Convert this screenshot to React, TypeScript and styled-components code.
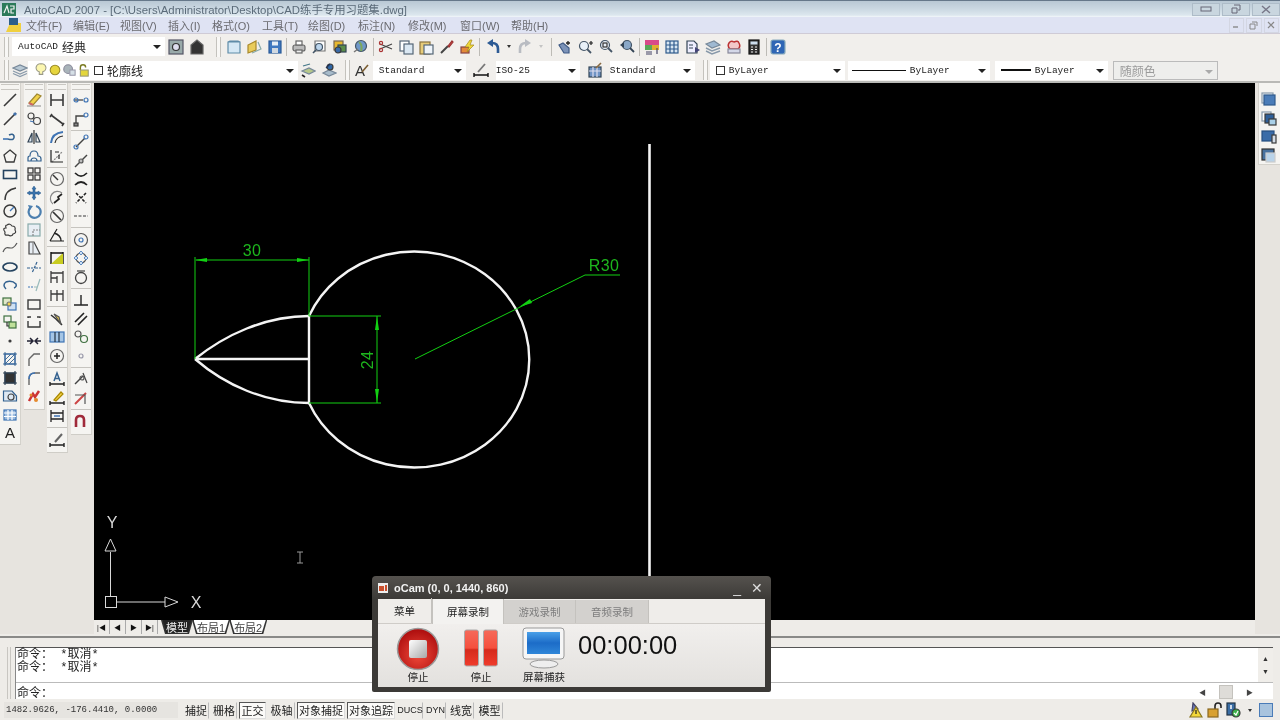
import React from 'react';
import styled, { createGlobalStyle } from 'styled-components';

const CJK = '"Liberation Sans", "Noto Sans CJK SC", sans-serif';
const MONO = '"Liberation Mono", "Noto Sans CJK SC", monospace';

const Global = createGlobalStyle`
  html, body { margin: 0; padding: 0; background: #eeece8; overflow: hidden; }
  * { box-sizing: border-box; }
`;

const Page = styled.div`
  position: relative;
  width: 1280px;
  height: 720px;
  display: flex;
  flex-direction: column;
  overflow: hidden;
  font-family: ${CJK};
  background: #eeece8;
  filter: blur(0.4px);
`;

const TitleBar = styled.div`
  height: 17px;
  flex: none;
  display: flex;
  align-items: center;
  padding-left: 2px;
  border-top: 1px solid #66788a;
  background: linear-gradient(#b9c8d4, #cbd8e2 50%, #dce7ee 88%, #f3f7fa);
  color: #5b6b79;
  font-size: 11.4px;
`;

const TitleText = styled.span`
  margin-left: 8px;
  white-space: nowrap;
`;

const WinButtons = styled.div`
  margin-left: auto;
  display: flex;
  gap: 2px;
`;

const WinButton = styled.div`
  width: 28px;
  height: 13px;
  display: flex;
  align-items: center;
  justify-content: center;
  border: 1px solid #aebcc8;
  background: #c9d6df;
`;

const MenuBar = styled.div`
  height: 17px;
  flex: none;
  display: flex;
  align-items: center;
  padding-left: 5px;
  background: #dfe3f3;
  border-bottom: 1px solid #cfcbd6;
  color: #6b6b70;
  font-size: 11px;
`;

const MenuItem = styled.span<{ $w: number }>`
  width: ${(p) => p.$w}px;
  white-space: nowrap;
`;

const MdiButtons = styled.div`
  margin-left: auto;
  display: flex;
  gap: 2px;
  padding-right: 1px;
`;

const MdiButton = styled.div`
  width: 15.5px;
  height: 15px;
  display: flex;
  align-items: center;
  justify-content: center;
  border: 1px solid #d3d6e2;
  color: #888;
`;

const ToolRow = styled.div<{ $h: number }>`
  height: ${(p) => p.$h}px;
  flex: none;
  display: flex;
  align-items: center;
  padding-left: 4px;
  background: #f1efec;
  border-bottom: ${(p) => (p.$h === 24 ? '2px solid #b9b9b6' : 'none')};
`;

const Grip = styled.div<{ $ml?: number; $mr?: number }>`
  width: 5px;
  height: 20px;
  flex: none;
  margin-left: ${(p) => p.$ml ?? 0}px;
  margin-right: ${(p) => p.$mr ?? 0}px;
  border-left: 1px solid #c4c2bd;
  border-right: 1px solid #c4c2bd;
  background: #f8f7f5;
`;

const Combo = styled.div<{ $w: number; $ml?: number; $pl?: number; $off?: boolean }>`
  position: relative;
  width: ${(p) => p.$w}px;
  height: 19px;
  flex: none;
  margin-left: ${(p) => p.$ml ?? 0}px;
  display: flex;
  align-items: center;
  padding-left: ${(p) => p.$pl ?? 6}px;
  gap: 4px;
  white-space: nowrap;
  background: ${(p) => (p.$off ? '#eeeeec' : '#ffffff')};
  border: ${(p) => (p.$off ? '1px solid #bbb' : 'none')};
  color: ${(p) => (p.$off ? '#9a9a9a' : '#222')};
  font-family: ${MONO};
  font-size: 9.5px;
  &::after {
    content: '';
    position: absolute;
    right: 4px;
    top: 8px;
    border-left: 4px solid transparent;
    border-right: 4px solid transparent;
    border-top: 4px solid ${(p) => (p.$off ? '#aaa' : '#222')};
  }
`;

const ComboCjk = styled.span`
  font-family: ${CJK};
  font-size: 12px;
`;

const LayerState = styled.div`
  display: flex;
  align-items: center;
  flex: none;
  & > svg {
    width: 14px;
    height: 14px;
  }
`;

const Swatch = styled.span`
  width: 9px;
  height: 9px;
  flex: none;
  border: 1px solid #333;
  background: #fff;
`;

const LineSample = styled.span<{ $thick?: boolean; $w: number }>`
  width: ${(p) => p.$w}px;
  height: ${(p) => (p.$thick ? 2.5 : 1)}px;
  flex: none;
  background: #111;
`;

const Tool = styled.div<{ $w?: number }>`
  width: ${(p) => p.$w ?? 20.4}px;
  height: 18.5px;
  flex: none;
  display: flex;
  align-items: center;
  justify-content: center;
`;

const SmallArrow = styled.div<{ $off?: boolean }>`
  width: 12px;
  flex: none;
  display: flex;
  justify-content: center;
  &::after {
    content: '';
    border-left: 2.5px solid transparent;
    border-right: 2.5px solid transparent;
    border-top: 3px solid ${(p) => (p.$off ? '#c4c4c4' : '#333')};
  }
`;

const VSep = styled.div<{ $w?: number }>`
  width: ${(p) => p.$w ?? 5}px;
  height: 18px;
  flex: none;
  display: flex;
  justify-content: center;
  &::after {
    content: '';
    width: 1px;
    background: #bdbbb6;
  }
`;

const IconSvg = styled.svg`
  width: 16px;
  height: 16px;
  fill: none;
  stroke: #3a3a3a;
  stroke-width: 1.2;
  flex: none;
`;

const Main = styled.div`
  height: 551px;
  flex: none;
  display: flex;
`;

const LeftDock = styled.div`
  width: 94px;
  flex: none;
  display: flex;
  align-items: flex-start;
  gap: 2.5px;
  background: #e7e4df;
`;

const VBar = styled.div<{ $h: number }>`
  width: 21px;
  height: ${(p) => p.$h}px;
  flex: none;
  padding-top: 7.75px;
  background: #f5f4f1;
  border-right: 1px solid #d4d2cc;
  border-bottom: 1px solid #cfcdc7;
  position: relative;
  &::before {
    content: '';
    position: absolute;
    left: 1px;
    right: 1px;
    top: 1px;
    height: 4px;
    border-top: 1px solid #c9c7c2;
    border-bottom: 1px solid #c9c7c2;
  }
`;

const HSep = styled.div`
  height: 5px;
  display: flex;
  align-items: center;
  &::after {
    content: '';
    height: 1px;
    width: 100%;
    background: #c6c4bf;
  }
`;

const CenterCol = styled.div`
  width: 1161px;
  flex: none;
  display: flex;
  flex-direction: column;
`;

const Canvas = styled.svg`
  width: 1161px;
  height: 537px;
  flex: none;
  display: block;
  background: #000;
`;

const DimText = styled.text`
  fill: #1db51d;
  font-family: "Liberation Sans", sans-serif;
  font-size: 16px;
  text-anchor: middle;
  letter-spacing: 0.4px;
`;

const UcsText = styled.text`
  fill: #d8d8d8;
  font-family: "Liberation Sans", sans-serif;
  font-size: 16px;
  text-anchor: middle;
`;

const TabBar = styled.div`
  height: 14px;
  flex: none;
  display: flex;
  align-items: stretch;
  background: #eeece8;
  font-size: 11px;
`;

const NavBtn = styled.div`
  width: 16px;
  display: flex;
  align-items: center;
  justify-content: center;
  border-right: 1px solid #aaa;
  color: #111;
  font-size: 7px;
`;

const SheetTab = styled.div<{ $active?: boolean; $ml?: number }>`
  position: relative;
  isolation: isolate;
  margin-left: ${(p) => p.$ml ?? 0}px;
  padding: 0 5px;
  display: flex;
  align-items: center;
  white-space: nowrap;
  clip-path: polygon(0 0, 100% 0, calc(100% - 4px) 100%, 4px 100%);
  background: #333;
  color: ${(p) => (p.$active ? '#eee' : '#444')};
  &::before {
    content: '';
    position: absolute;
    inset: 0 1.5px 1px 1.5px;
    z-index: -1;
    clip-path: polygon(0 0, 100% 0, calc(100% - 4px) 100%, 4px 100%);
    background: ${(p) => (p.$active ? '#222' : '#fff')};
  }
`;

const RightDock = styled.div`
  flex: 1;
  background: #e7e4df;
`;

const RightBar = styled.div`
  width: 22px;
  margin-left: 3px;
  height: 82px;
  padding-top: 7.75px;
  background: #f5f4f1;
  border-left: 1px solid #d4d2cc;
  border-bottom: 1px solid #d4d2cc;
`;

const CommandArea = styled.div`
  height: 64px;
  flex: none;
  display: flex;
  padding: 9px 7px 1px 7px;
  gap: 4px;
  background: #eeece8;
  border-top: 2px solid #8a8a88;
  margin-top: 2px;
`;

const CommandGrip = styled.div`
  width: 4px;
  flex: none;
  border-left: 1px solid #c8c6c1;
  border-right: 1px solid #c8c6c1;
`;

const CommandBox = styled.div`
  flex: 1;
  display: flex;
  flex-direction: column;
  background: #fff;
  border-top: 1px solid #555;
  border-left: 1px solid #888;
`;

const History = styled.div`
  height: 35px;
  flex: none;
  display: flex;
  border-bottom: 1px solid #bbb;
`;

const HistoryText = styled.div`
  flex: 1;
  padding: 1px 0 0 1px;
  font-family: ${MONO};
  font-size: 12px;
  line-height: 13px;
  color: #222;
`;

const VScroll = styled.div`
  width: 15px;
  display: flex;
  flex-direction: column;
  justify-content: space-between;
  align-items: center;
  padding: 7px 0;
  background: #f0eeea;
  color: #333;
  font-size: 7px;
`;

const PromptRow = styled.div`
  flex: 1;
  display: flex;
  align-items: center;
  padding-left: 1px;
  font-family: ${MONO};
  font-size: 12px;
  color: #222;
`;

const HScroll = styled.div`
  margin-left: auto;
  width: 54px;
  margin-right: 20px;
  display: flex;
  align-items: center;
  justify-content: space-between;
  color: #444;
  font-size: 7px;
`;

const Thumb = styled.div`
  width: 14px;
  height: 14px;
  background: #dedcd8;
  border: 1px solid #c4c2bd;
`;

const StatusBar = styled.div`
  height: 20px;
  flex: none;
  display: flex;
  align-items: center;
  padding-left: 4px;
  background: #eeece8;
`;

const Coords = styled.div`
  width: 174px;
  height: 16px;
  margin-right: 5px;
  padding-left: 2px;
  display: flex;
  align-items: center;
  background: #e6e4e0;
  color: #333;
  font-family: "Liberation Mono", monospace;
  font-size: 9px;
  white-space: nowrap;
`;

const StatusBtn = styled.div<{ $w: number; $on?: boolean; $latin?: boolean }>`
  width: ${(p) => p.$w}px;
  height: 17px;
  margin-right: 2px;
  display: flex;
  align-items: center;
  justify-content: center;
  white-space: nowrap;
  color: #222;
  font-size: ${(p) => (p.$latin ? 9 : 11)}px;
  border: 1px solid ${(p) => (p.$on ? '#555' : 'transparent')};
  border-right-color: ${(p) => (p.$on ? '#ddd' : '#bbb')};
  border-bottom-color: ${(p) => (p.$on ? '#ddd' : 'transparent')};
  background: ${(p) => (p.$on ? '#fbfaf8' : 'transparent')};
`;

const Tray = styled.div`
  margin-left: auto;
  display: flex;
  align-items: center;
  gap: 3px;
  padding-right: 7px;
`;

const OCam = styled.div`
  position: absolute;
  left: 372px;
  top: 576px;
  width: 399px;
  height: 116px;
  padding: 0 6px 5px;
  display: flex;
  flex-direction: column;
  border-radius: 4px 4px 2px 2px;
  background: linear-gradient(#55524e, #3c3a37 20%, #3c3a37);
`;

const OCamTitle = styled.div`
  height: 23px;
  flex: none;
  display: flex;
  align-items: center;
  gap: 6px;
  color: #f2f2f2;
  font-family: "Liberation Sans", sans-serif;
  font-size: 11px;
  font-weight: 700;
`;

const OCamClose = styled.div`
  margin-left: auto;
  display: flex;
  align-items: center;
  gap: 10px;
  padding-right: 2px;
  color: #ddd;
  font-family: "Liberation Sans", sans-serif;
  font-size: 14px;
  font-weight: 400;
`;

const OCamTabs = styled.div`
  height: 25px;
  flex: none;
  display: flex;
  align-items: flex-end;
  background: #efedea;
  border-bottom: 1px solid #cfccc8;
`;

const OCamTab = styled.div<{ $kind: 'plain' | 'active' | 'off'; $w: number }>`
  width: ${(p) => p.$w}px;
  height: ${(p) => (p.$kind === 'off' ? 23 : 25)}px;
  margin-bottom: ${(p) => (p.$kind === 'active' ? -1 : 0)}px;
  display: flex;
  align-items: center;
  justify-content: center;
  font-size: 10.5px;
  color: ${(p) => (p.$kind === 'off' ? '#7d7d7d' : '#222')};
  background: ${(p) =>
    p.$kind === 'off' ? '#d3d1ce' : p.$kind === 'active' ? '#f3f2f0' : 'transparent'};
  border-right: 1px solid #c4c2be;
  border-left: ${(p) => (p.$kind === 'active' ? '1px solid #c4c2be' : 'none')};
`;

const OCamBody = styled.div`
  flex: 1;
  display: flex;
  padding-left: 19px;
  background: linear-gradient(#f1efed, #e3e1de);
`;

const CamButton = styled.div<{ $w: number; $ml?: number }>`
  width: ${(p) => p.$w}px;
  margin-left: ${(p) => p.$ml ?? 0}px;
  padding-top: 3px;
  display: flex;
  flex-direction: column;
  align-items: center;
  font-size: 10.5px;
  line-height: 12px;
  color: #222;
  white-space: nowrap;
`;

const Timer = styled.div`
  margin: 6px 0 0 12px;
  font-family: "Liberation Sans", sans-serif;
  font-size: 25.5px;
  line-height: 30px;
  color: #111;
`;

// shorthand colours for the toolbar drawings
const BLUE = '#3f74b5';
const PALE = '#cfe0f2';
const YEL = '#f1d24a';

const ICONS: Record<string, React.ReactNode> = {
  line: <path d="M2 14L14 2" strokeWidth="1.6" />,
  xline: <><path d="M2 14L14 2" strokeWidth="1.6" /><circle cx="13" cy="3" r="1" stroke={BLUE} /></>,
  pline: <><path d="M1 10H6" stroke={BLUE} strokeWidth="1.6" /><path d="M6 10Q13 12 12 7Q11 4 7 6" stroke="#33618f" strokeWidth="1.6" /></>,
  polygon: <path d="M8 2L14 7L12 14H4L2 7Z" strokeWidth="1.3" />,
  rect: <rect x="1.5" y="4.5" width="13" height="8" stroke="#24425f" strokeWidth="1.6" />,
  arc: <path d="M3 15Q3 5 14 3" strokeWidth="1.5" />,
  circle: <><circle cx="8" cy="8" r="6" strokeWidth="1.5" /><path d="M8 8L12 4" stroke={BLUE} /></>,
  cloud: <path d="M5 3Q8 1 10 4Q14 4 13 8Q15 11 11 12Q10 15 6 13Q2 14 3 10Q0 6 4 6Q3 3 5 3Z" />,
  spline: <path d="M1 12C5 2 9 14 15 3" stroke="#555" />,
  ellipse: <ellipse cx="8" cy="8" rx="7" ry="4" stroke="#24425f" strokeWidth="1.7" />,
  earc: <path d="M4 12Q0 8 4 5Q10 3 14 7Q15 10 12 11" stroke="#33618f" strokeWidth="1.5" />,
  insert: <><rect x="1" y="2" width="8" height="7" fill="#dfe8c8" stroke="#3f7040" /><rect x="6" y="7" width="8" height="7" fill={PALE} stroke={BLUE} /><circle cx="7" cy="8" r="2" fill={YEL} stroke="#777" /></>,
  block: <><rect x="2" y="2" width="7" height="6" stroke="#3f7040" /><rect x="7" y="8" width="7" height="6" fill="#bfe09a" stroke="#3f7040" /><path d="M5 8V12H7" stroke="#333" /></>,
  point: <circle cx="8" cy="8" r="1" fill="#333" />,
  hatch: <><rect x="3" y="3" width="10" height="10" stroke={BLUE} /><path d="M3 9L9 3M3 13L13 3M7 13L13 7M1 3H15M1 13H15M3 1V15M13 1V15" stroke="#33618f" strokeWidth=".9" /></>,
  gradient: <><rect x="3" y="3" width="10" height="10" fill="#333" stroke="#234" /><path d="M1 3H15M1 13H15M3 1V15M13 1V15" stroke="#345" /></>,
  region: <><path d="M1.5 3H10L14.5 8V13H1.5Z" fill="#dde8f3" stroke="#33618f" /><circle cx="9" cy="9" r="3" stroke="#444" /></>,
  table: <><rect x="2" y="3" width="12" height="10" fill="#9dbde0" stroke={BLUE} /><path d="M2 6H14M2 9.5H14M6 3V13M10 3V13" stroke="#fff" /></>,
  mtext: <text x="8" y="13" textAnchor="middle" fontSize="15" fontFamily="Liberation Sans" fill="#222" stroke="none">A</text>,

  erase: <><path d="M3 11L11 2L15 4L7 13Z" fill={YEL} stroke="#a08830" /><path d="M3 11L7 13" stroke="#c66" strokeWidth="2" /><path d="M1 14H15" stroke="#999" /></>,
  copyobj: <><circle cx="5" cy="5" r="3" stroke="#444" /><circle cx="11" cy="10" r="3.5" stroke="#444" /><path d="M4 10L8 11" stroke={BLUE} /></>,
  mirror: <><path d="M8 1V15" stroke="#333" /><path d="M6 4L2 13H6Z" fill="#dfe8f0" stroke="#345" /><path d="M10 4L14 13H10Z" stroke="#345" /></>,
  offset: <><path d="M2 13V10Q2 8 4 8Q4 3 8 3Q12 3 12 8Q15 8 15 11V13Z" stroke="#33618f" /><path d="M5 13Q5 10 8 10Q11 10 11 13" stroke="#33618f" /></>,
  array: <><rect x="2" y="2" width="5" height="5" strokeWidth="1.3" /><rect x="9" y="2" width="5" height="5" strokeWidth="1.3" /><rect x="2" y="9" width="5" height="5" strokeWidth="1.3" /><rect x="9" y="9" width="5" height="5" strokeWidth="1.3" /></>,
  move: <path d="M8 1L10 4H9V7H12V6L15 8L12 10V9H9V12H10L8 15L6 12H7V9H4V10L1 8L4 6V7H7V4H6Z" fill="#3972ab" stroke="#2b5a8a" strokeWidth=".5" />,
  rotate: <><path d="M4 5A6 6 0 1 0 10 3" stroke="#4c7faf" strokeWidth="2.2" /><path d="M2 2L7 3L4 7Z" fill="#4c7faf" stroke="none" /></>,
  scale: <><rect x="2" y="2" width="12" height="12" fill="#e8eef4" stroke="#8aa" /><path d="M7 14V8H14" stroke="#888" strokeDasharray="2 1" /></>,
  stretch: <><path d="M3 2H8L14 14H3Z" fill="#e8eef4" stroke="#444" /><path d="M7 2V14" stroke="#888" /></>,
  trim: <path d="M1 9H7M9 9H15M11 3L6 14" stroke="#33618f" strokeDasharray="3 1" />,
  extend: <><path d="M2 10H8" stroke={BLUE} strokeDasharray="2 1" /><path d="M8 10H11M14 2L10 14" stroke="#9bb" /></>,
  brk: <rect x="2" y="4" width="12" height="9" strokeWidth="1.4" />,
  brk2: <path d="M2 7V13H14V7M2 4V3H5M11 3H14V4" strokeWidth="1.4" />,
  join: <path d="M1 8H6M10 8H15M4 5L7 8L4 11M12 5L9 8L12 11" stroke="#223" strokeWidth="1.5" />,
  chamfer: <path d="M14 3H8L3 8V15M6 5L3 8" stroke="#666" strokeWidth="1.4" />,
  fillet: <><path d="M14 3H9Q3 3 3 9V15" stroke="#666" strokeWidth="1.4" /><path d="M9 3Q3 3 3 9" stroke={BLUE} strokeWidth="1.5" /></>,
  explode: <><path d="M3 13L7 6L9 9L13 3" stroke="#c33" strokeWidth="2.5" /><circle cx="5" cy="7" r="1.5" fill="#e58a2d" stroke="none" /><circle cx="10" cy="12" r="2" fill="#e58a2d" stroke="none" /></>,

  dimlin: <path d="M2 2V14M14 2V14M2 8H14" strokeWidth="1.6" />,
  dimali: <path d="M3 3L1 6M13 15L15 12M2 4L14 13" strokeWidth="1.6" />,
  dimarc: <><path d="M2 14Q3 4 14 3" stroke={BLUE} strokeWidth="2" /><path d="M6 14Q7 8 14 7" stroke="#333" /></>,
  dimord: <><path d="M3 14L13 4" stroke="#888" strokeDasharray="2 1" /><path d="M2 2V14H14M6 4H10M10 7V11" stroke="#222" strokeWidth="1.2" /></>,
  dimrad: <><circle cx="8" cy="8" r="6.5" stroke="#666" /><path d="M4 4L9 9" stroke="#333" strokeWidth="1.4" /></>,
  dimjog: <><path d="M13 3A7 7 0 0 0 4 14" stroke="#888" /><path d="M13 4L9 7L10 9L5 13" stroke="#222" strokeWidth="1.7" /></>,
  dimdia: <><circle cx="8" cy="8" r="6.5" stroke="#666" /><path d="M4 4L12 12" stroke="#333" strokeWidth="1.7" /></>,
  dimang: <><path d="M1 14H15M1 14L8 2" stroke="#222" /><path d="M5 6Q12 8 12 14" stroke="#222" strokeWidth="1.4" /></>,
  qdim: <><path d="M2 2V14M14 2V14" stroke="#111" strokeWidth="1.4" /><path d="M2 14L14 3V14Z" fill="#c8cc20" stroke="none" /><path d="M2 3H14" stroke="#111" strokeWidth="1.5" /></>,
  dimbase: <path d="M2 2V14M14 2V14M2 4H14M2 9H8M8 7V14" strokeWidth="1.3" />,
  dimcont: <path d="M2 3V14M8 3V14M14 3V14M2 7H14" strokeWidth="1.3" />,
  qlead: <><path d="M2 4L7 8L13 14" stroke="#333" strokeWidth="1.6" /><path d="M5 3L10 6L12 13Z" fill={YEL} stroke="#555" /></>,
  tol: <><rect x="1" y="3" width="14" height="10" fill="#a5c5e5" stroke={BLUE} /><path d="M6 3V13M10 3V13" stroke="#234" /></>,
  center: <><circle cx="8" cy="8" r="6.5" stroke="#666" /><path d="M5 8H11M8 5V11" stroke="#222" strokeWidth="1.5" /></>,
  dimed: <><path d="M5 10L8 2L11 10M6 7.5H10" stroke="#33618f" strokeWidth="1.5" /><path d="M1 11V15M15 11V15M1 13H15" stroke="#222" strokeWidth="1.4" /></>,
  dimted: <><path d="M5 10L12 2L14 4L7 11Z" fill={YEL} stroke="#a80" /><path d="M1 11V15M15 11V15M1 13H15" stroke="#222" strokeWidth="1.4" /></>,
  dimupd: <><path d="M2 2V14M14 2V14M2 5H14M2 11H14" stroke="#222" strokeWidth="1.3" /><path d="M5 8H11" stroke={BLUE} strokeWidth="1.5" /></>,
  dimsty: <><path d="M6 10L13 2" stroke="#666" strokeWidth="2" /><path d="M1 11V15M15 11V15M1 13H15" stroke="#222" strokeWidth="1.4" /></>,

  ep1: <><path d="M1 8H10" stroke="#555" strokeWidth="1.4" /><circle cx="3" cy="8" r="2" stroke={BLUE} /><circle cx="13" cy="8" r="2" stroke={BLUE} /></>,
  ep2: <><path d="M3 14V5H11" stroke="#444" strokeWidth="1.4" /><circle cx="13" cy="4" r="2" stroke={BLUE} /><rect x="1" y="12" width="4" height="3" fill="#888" /></>,
  ep3: <><path d="M3 13L12 4" stroke="#444" strokeWidth="1.4" /><circle cx="3" cy="13" r="2" stroke={BLUE} /><circle cx="13" cy="3" r="2" stroke={BLUE} /></>,
  ep4: <><path d="M2 14L14 2" stroke="#444" strokeWidth="1.4" /><circle cx="8" cy="8" r="2" fill="#bbb" stroke="#555" /></>,
  inter: <path d="M2 2Q8 8 14 2M2 14Q8 8 14 14" stroke="#222" strokeWidth="1.7" />,
  inter2: <path d="M3 3L13 13M13 3L3 13" stroke="#222" strokeWidth="1.5" strokeDasharray="3 1.5" />,
  ext: <path d="M1 8H15" stroke="#777" strokeDasharray="3 1.5" strokeWidth="1.5" />,
  cen: <><circle cx="8" cy="8" r="6.5" stroke="#555" /><circle cx="8" cy="8" r="2" stroke={BLUE} /></>,
  quad: <><circle cx="8" cy="8" r="5" stroke="#555" /><path d="M8 1L10 3L8 5L6 3ZM8 11L10 13L8 15L6 13ZM1 8L3 6L5 8L3 10ZM11 8L13 6L15 8L13 10Z" fill={PALE} stroke={BLUE} strokeWidth=".8" /></>,
  tan: <><circle cx="8" cy="9" r="5.5" stroke="#444" strokeWidth="1.3" /><path d="M4 2H12" stroke="#444" /></>,
  perp: <path d="M1 13H15M8 3V13" stroke="#222" strokeWidth="1.4" />,
  par: <path d="M2 11L11 2M5 14L14 5" stroke="#222" strokeWidth="1.6" />,
  ins: <><circle cx="5" cy="5" r="3" stroke="#555" /><circle cx="11" cy="10" r="3.5" stroke="#3f7040" /></>,
  node: <circle cx="8" cy="8" r="2" stroke="#99a" />,
  near: <><path d="M2 13L10 5" stroke="#444" strokeWidth="1.4" /><path d="M10 2L14 12" stroke="#444" /><circle cx="9" cy="7" r="2" stroke="#555" /></>,
  none: <><path d="M2 14L13 3" stroke="#c44" strokeWidth="2" /><path d="M2 5H12V14" stroke="#555" /></>,
  snapset: <path d="M3 14V7Q3 3 7 3Q11 3 11 7V14" stroke="#a02a3a" strokeWidth="2.6" />,

  dock1: <><rect x="1" y="1" width="11" height="10" fill="#eef2f6" stroke="#8899aa" /><rect x="3" y="3" width="11" height="10" fill="#4a7cb8" stroke="#2f5a8c" /></>,
  dock2: <><rect x="1" y="1" width="9" height="9" fill="#fff" stroke="#8899aa" /><rect x="4" y="3" width="9" height="9" fill="#2f5f98" /><rect x="8" y="8" width="7" height="6" fill="#a9d0e8" /></>,
  dock3: <><rect x="1" y="2" width="12" height="10" fill="#3a6ca8" stroke="#264f80" /><rect x="11" y="6" width="4" height="8" fill="#d5dde5" /></>,
  dock4: <><rect x="1" y="1" width="12" height="11" fill="#47719f" stroke="#333" /><rect x="5" y="5" width="9" height="9" fill="#b9d3e9" stroke="#ccc" /></>,

  qsel: <><rect x="1" y="1" width="14" height="14" fill="#9aa" stroke="#556" /><circle cx="8" cy="8" r="3.5" fill="#dde" stroke="#333" /></>,
  house: <path d="M2 15V6L8 1L14 6V15Z" fill="#333" stroke="#666" />,
  new: <path d="M2 3H14V14H2ZM2 3L4 2H12L14 3" fill="#d5e8f5" stroke="#5f8ca8" />,
  open: <><path d="M2 14V6L10 2V11Z" fill="#e9cc5a" stroke="#a8882a" /><path d="M6 14L15 10L12 3" stroke="#8aa" /></>,
  save: <><rect x="2" y="2" width="12" height="12" fill="#3f78c0" stroke="#2a5a98" /><rect x="5" y="2.5" width="6" height="4" fill="#e6eef6" stroke="none" /><rect x="5" y="9" width="6" height="5" fill="#d0d8e0" stroke="none" /></>,
  print: <><rect x="2" y="6" width="12" height="6" rx="2" fill="#bbb" stroke="#666" /><rect x="5" y="2" width="6" height="4" fill="#fff" stroke="#666" /><rect x="5" y="11" width="6" height="3" fill="#eee" stroke="#666" /></>,
  preview: <><path d="M3 2H13V12H3Z" fill="#fff" stroke="#777" /><circle cx="7" cy="8" r="3.5" fill="#bcd5ec" stroke="#456" /><path d="M4 11L1 14" stroke="#456" strokeWidth="1.6" /></>,
  publish: <><rect x="2" y="2" width="9" height="9" fill="#e8b830" stroke="#765" /><rect x="6" y="6" width="8" height="7" fill="#5a8c4a" stroke="#345" /><circle cx="6" cy="11" r="3" fill="#3a6aa8" /></>,
  web: <><circle cx="9" cy="7" r="5.5" fill="#6f98c8" stroke="#456" /><path d="M7 3Q11 6 9 12" stroke="#7da85a" strokeWidth="2" /><path d="M2 13L6 10" stroke="#777" strokeWidth="1.5" /></>,
  cut: <><path d="M2 5L14 10M2 10L14 5" stroke="#444" /><circle cx="3" cy="4" r="1.6" stroke="#a33" /><circle cx="3" cy="11" r="1.6" stroke="#a33" /></>,
  copy: <><rect x="2" y="2" width="9" height="10" fill="#fff" stroke="#567" /><rect x="6" y="5" width="9" height="10" fill="#dbe8f3" stroke="#567" /></>,
  paste: <><rect x="2" y="3" width="10" height="12" fill="#e7cc7a" stroke="#8a7340" /><rect x="6" y="6" width="9" height="9" fill="#eef4fa" stroke="#567" /></>,
  match: <><path d="M2 14L9 7" stroke="#444" strokeWidth="2" /><path d="M9 7L13 2L14 3L10 8Z" fill="#d44" stroke="#933" /></>,
  bedit: <><rect x="2" y="8" width="8" height="6" fill="#e48a3a" stroke="#844" /><path d="M11 1L6 8H10L8 13L15 6H11L13 1Z" fill="#f0d838" stroke="#a08820" strokeWidth=".7" /></>,
  undo: <><path d="M13 14V10Q13 4 7 4" stroke="#2c5a94" strokeWidth="2.6" /><path d="M8 0L2 4L8 8Z" fill="#2c5a94" stroke="none" /></>,
  redo: <><path d="M3 14V10Q3 4 9 4" stroke="#b9bcc2" strokeWidth="2.6" /><path d="M8 0L14 4L8 8Z" fill="#b9bcc2" stroke="none" /></>,
  pan: <><path d="M2 6L6 4L12 9V14H7Z" fill="#7c93b8" stroke="#3f5a85" /><path d="M11 2V6M9 4H13" stroke="#222" strokeWidth="1.3" /></>,
  zoomr: <><circle cx="6" cy="7" r="4.5" fill="#e8f0f8" stroke="#456" /><path d="M9 10L13 14" stroke="#456" strokeWidth="1.8" /><path d="M13 2V6M11 4H15" stroke="#222" /></>,
  zoomw: <><circle cx="7" cy="6" r="4.5" fill="#e8f0f8" stroke="#456" /><path d="M10 9L14 13" stroke="#456" strokeWidth="1.8" /><rect x="5" y="4" width="4" height="4" stroke="#333" /></>,
  zoomp: <><circle cx="8" cy="6" r="4.5" fill="#8aa8c8" stroke="#456" /><path d="M11 9L15 13" stroke="#345" strokeWidth="1.8" /><path d="M1 6L5 3V9Z" fill="#345" stroke="none" /></>,
  props: <><rect x="1" y="1" width="14" height="5" fill="#d84a8a" stroke="none" /><rect x="1" y="6" width="7" height="5" fill="#58a858" stroke="none" /><rect x="8" y="6" width="7" height="5" fill="#e0b030" stroke="none" /><path d="M2 13H8M2 15H8M13 9V15" stroke="#446" /></>,
  dc: <><rect x="2" y="2" width="12" height="12" fill="#d6e5f2" stroke="#2f5a8c" /><path d="M2 6H14M6 2V14M10 2V14M2 10H14" stroke="#2f5a8c" /></>,
  tp: <><path d="M2 2H9L12 5V14H2Z" fill="#eef" stroke="#345" /><path d="M4 6H8M4 9H8" stroke="#345" /><path d="M10 8L15 11L10 14Z" fill="#447" stroke="none" /></>,
  ss: <><path d="M1 5L9 2L15 6L7 9Z" fill="#9fb9d2" stroke="#789" /><path d="M1 9L7 12L15 9M1 12L7 15L15 12" stroke="#89a" strokeWidth="1.4" /></>,
  markup: <><path d="M3 4Q5 1 8 3Q12 1 13 4Q15 8 12 10H4Q1 7 3 4Z" fill="#f2c8c8" stroke="#b33" strokeWidth="1.5" /><rect x="2" y="10" width="12" height="4" fill="#d4d8e8" stroke="#889" /></>,
  calc: <><rect x="3" y="1" width="10" height="14" fill="#333" stroke="#111" /><rect x="4.5" y="2.5" width="7" height="3" fill="#cde" stroke="none" /><path d="M5 8H7M9 8H11M5 10.5H7M9 10.5H11M5 13H7M9 13H11" stroke="#eee" /></>,
  help: <><rect x="1" y="1" width="14" height="14" rx="2" fill="#2f66b5" stroke="#8ab" /><text x="8" y="12.5" textAnchor="middle" fontSize="12" fontWeight="700" fontFamily="Liberation Sans" fill="#fff" stroke="none">?</text></>,

  layers: <><path d="M1 6L8 3L15 6L8 9Z" fill="#b8c8d4" stroke="#789" /><path d="M1 9L8 12L15 9M1 11.5L8 14.5L15 11.5" stroke="#89a" /></>,
  bulb: <><path d="M8 1A4.5 4.5 0 0 1 10 10V13H6V10A4.5 4.5 0 0 1 8 1Z" fill="#fbf6b0" stroke="#998" /></>,
  sun: <circle cx="8" cy="8" r="5.5" fill="#e6d53e" stroke="#998a2a" />,
  freeze: <><circle cx="7" cy="7" r="5" fill="#a9b4ba" stroke="#889" /><rect x="9" y="8" width="6" height="6" fill="#d5dfe6" stroke="#99a" /></>,
  lockL: <><path d="M5 8V5A3 3 0 0 1 11 5" stroke="#7a7a20" strokeWidth="1.6" /><rect x="5" y="8" width="9" height="7" fill="#e3d63c" stroke="#997" /></>,
  layprev: <><path d="M2 9L9 6L15 9L9 12Z" fill="#b6c88a" stroke="#789" /><path d="M3 4L10 2" stroke="#478" /><path d="M2 13L5 15" stroke="#222" strokeWidth="1.6" /></>,
  laymatch: <><path d="M2 11L8 8L15 11L8 14Z" fill="#a8bccb" stroke="#789" /><circle cx="9" cy="5" r="3" fill="#2f66a5" /><path d="M5 6L9 2" stroke="#235" /></>,
  styleA: <><text x="7" y="14" textAnchor="middle" fontSize="15" fontFamily="Liberation Sans" fill="#333" stroke="none">A</text><path d="M9 10L15 3" stroke="#7a5c30" strokeWidth="1.6" /></>,
  dimstyle: <><path d="M1 13H15M1 11V15M15 11V15" stroke="#111" strokeWidth="1.4" /><path d="M5 10L12 2" stroke="#777" strokeWidth="1.8" /></>,
  tblstyle: <><rect x="2" y="5" width="12" height="10" fill="#6f93c4" stroke="#345" /><path d="M2 9H14M6 5V15M10 5V15" stroke="#dde" /><path d="M9 6L14 1" stroke="#8a6a40" strokeWidth="1.6" /></>,

  warn: <><path d="M6 1L11 7L5 9Z" fill="#6a78b8" stroke="#446" /><path d="M9 5L15 15H3Z" fill="#f3d83a" stroke="#887520" /><path d="M9 8V12" stroke="#222" /></>,
  padlock: <><path d="M9 7V4A3 3 0 0 1 15 4V6" stroke="#222" strokeWidth="1.6" /><rect x="2" y="7" width="10" height="8" fill="#d8a030" stroke="#8a6820" /></>,
  comm: <><rect x="2" y="1" width="8" height="12" fill="#3b6ea5" stroke="#234" /><path d="M6 3V7" stroke="#fff" strokeWidth="1.5" /><circle cx="11" cy="11" r="4" fill="#3db14a" /><path d="M9 11L11 13L13 9" stroke="#fff" /></>,
};

const Icon = ({ n }: { n: string }) => <IconSvg viewBox="0 0 16 16">{ICONS[n]}</IconSvg>;

const Tools = ({ names }: { names: string[] }) => (
  <>
    {names.map((n) => (
      <Tool key={n}>
        <Icon n={n} />
      </Tool>
    ))}
  </>
);

const VGroups = ({ groups }: { groups: string[][] }) => (
  <>
    {groups.map((names, i) => (
      <React.Fragment key={names[0]}>
        {i > 0 && <HSep />}
        {names.map((n) => (
          <Tool key={n} $w={20}>
            <Icon n={n} />
          </Tool>
        ))}
      </React.Fragment>
    ))}
  </>
);

const MENUS: [string, number][] = [
  ['文件(F)', 47], ['编辑(E)', 47], ['视图(V)', 48], ['插入(I)', 44], ['格式(O)', 50], ['工具(T)', 46],
  ['绘图(D)', 50], ['标注(N)', 50], ['修改(M)', 52], ['窗口(W)', 51], ['帮助(H)', 50],
];

const LEFT_BARS: { h: number; groups: string[][] }[] = [
  { h: 362, groups: [['line', 'xline', 'pline', 'polygon', 'rect', 'arc', 'circle', 'cloud', 'spline', 'ellipse', 'earc', 'insert', 'block', 'point', 'hatch', 'gradient', 'region', 'table', 'mtext']] },
  { h: 327, groups: [['erase', 'copyobj', 'mirror', 'offset', 'array', 'move', 'rotate', 'scale', 'stretch', 'trim', 'extend', 'brk', 'brk2', 'join', 'chamfer', 'fillet', 'explode']] },
  {
    h: 370,
    groups: [
      ['dimlin', 'dimali', 'dimarc', 'dimord'],
      ['dimrad', 'dimjog', 'dimdia', 'dimang'],
      ['qdim', 'dimbase', 'dimcont'],
      ['qlead', 'tol', 'center'],
      ['dimed', 'dimted', 'dimupd'],
      ['dimsty'],
    ],
  },
  {
    h: 352,
    groups: [
      ['ep1', 'ep2'],
      ['ep3', 'ep4', 'inter', 'inter2', 'ext'],
      ['cen', 'quad', 'tan'],
      ['perp', 'par', 'ins', 'node'],
      ['near', 'none'],
      ['snapset'],
    ],
  },
];

const STATUS: { t: string; w: number; on?: boolean; latin?: boolean }[] = [
  { t: '捕捉', w: 26 },
  { t: '栅格', w: 26 },
  { t: '正交', w: 27, on: true },
  { t: '极轴', w: 27 },
  { t: '对象捕捉', w: 48, on: true },
  { t: '对象追踪', w: 48, on: true },
  { t: 'DUCS', w: 26, latin: true },
  { t: 'DYN', w: 21, latin: true },
  { t: '线宽', w: 26 },
  { t: '模型', w: 27 },
];

const GREEN = '#12d012';

const Drawing = () => (
  <Canvas viewBox="94 83 1161 537">
    <g fill="none" stroke="#f4f4f4" strokeWidth="2.4">
      <path d="M309 316A115 108 0 1 1 309 403" />
      <path d="M309 316V403M195 359H309" />
      <path d="M195 359C225 335 265 316 309 316M195 359C225 385 265 403 309 403" />
      <path d="M649.5 144V580" strokeWidth="2.6" />
    </g>
    <g fill="none" stroke={GREEN} strokeWidth="1">
      <path d="M195 359V257M309 316V257M196 260H309" />
      <path d="M309 316H381M309 403H381M377 316V403" />
      <path d="M415 359L585 275H620" />
    </g>
    <g fill={GREEN} stroke="none">
      <path d="M195 260L207 258V262ZM309 260L297 258V262Z" />
      <path d="M377 316L375 330H379ZM377 403L375 389H379Z" />
      <path d="M519 307L530 299L532 303Z" />
    </g>
    <DimText x="252" y="256">30</DimText>
    <DimText x="604" y="271">R30</DimText>
    <DimText transform="translate(373 360) rotate(-90)">24</DimText>
    <g fill="none" stroke="#d8d8d8" strokeWidth="1">
      <path d="M110.5 596V552M116 602H165" />
      <rect x="105.5" y="596.5" width="11" height="11" />
      <path d="M110.5 539L105 551H116ZM165 597L178 602L165 607Z" />
    </g>
    <UcsText x="112" y="528">Y</UcsText>
    <UcsText x="196" y="608">X</UcsText>
    <path d="M297 552H303M300 552V563M297 563H303" fill="none" stroke="#9a9a9a" strokeWidth="1" />
  </Canvas>
);

const OCamWindow = () => (
  <OCam>
    <OCamTitle>
      <svg width="10" height="10" viewBox="0 0 10 10">
        <rect width="10" height="10" fill="#eee" />
        <rect x="1" y="3" width="5" height="5" fill="#c9502e" />
        <rect x="7" y="2" width="2" height="6" fill="#c9502e" />
      </svg>
      oCam (0, 0, 1440, 860)
      <OCamClose>
        <span>_</span>
        <span>✕</span>
      </OCamClose>
    </OCamTitle>
    <OCamTabs>
      <OCamTab $kind="plain" $w={54}>菜单</OCamTab>
      <OCamTab $kind="active" $w={72}>屏幕录制</OCamTab>
      <OCamTab $kind="off" $w={72}>游戏录制</OCamTab>
      <OCamTab $kind="off" $w={73}>音频录制</OCamTab>
    </OCamTabs>
    <OCamBody>
      <CamButton $w={42}>
        <svg width="44" height="44" viewBox="0 0 44 44">
          <defs>
            <radialGradient id="stopRed" cx="50%" cy="65%" r="60%">
              <stop offset="0" stopColor="#f04a3a" />
              <stop offset="1" stopColor="#b01010" />
            </radialGradient>
            <linearGradient id="stopGrey" x1="0" y1="0" x2="1" y2="1">
              <stop offset="0" stopColor="#ffffff" />
              <stop offset="1" stopColor="#a8a8a8" />
            </linearGradient>
          </defs>
          <circle cx="22" cy="22" r="20.5" fill="url(#stopRed)" stroke="#9a9a9a" strokeWidth="1.5" />
          <rect x="13" y="13" width="18" height="18" rx="2" fill="url(#stopGrey)" />
        </svg>
        停止
      </CamButton>
      <CamButton $w={34} $ml={25}>
        <svg width="34" height="44" viewBox="0 0 34 44">
          <defs>
            <linearGradient id="pauseRed" x1="0" y1="0" x2="0" y2="1">
              <stop offset="0" stopColor="#f56a5a" />
              <stop offset="0.5" stopColor="#f5503e" />
              <stop offset="0.55" stopColor="#d52a1c" />
              <stop offset="1" stopColor="#f03c2c" />
            </linearGradient>
          </defs>
          <rect x="0.5" y="3" width="14" height="36" rx="2" fill="url(#pauseRed)" stroke="#aaa" />
          <rect x="19.5" y="3" width="14" height="36" rx="2" fill="url(#pauseRed)" stroke="#aaa" />
        </svg>
        停止
      </CamButton>
      <CamButton $w={44} $ml={24}>
        <svg width="44" height="44" viewBox="0 0 44 44">
          <defs>
            <linearGradient id="screenBlue" x1="0" y1="0" x2="0" y2="1">
              <stop offset="0" stopColor="#4aa0e8" />
              <stop offset="0.5" stopColor="#1c6cc8" />
              <stop offset="1" stopColor="#2f86d8" />
            </linearGradient>
          </defs>
          <ellipse cx="22" cy="37" rx="14" ry="4" fill="#eee" stroke="#999" />
          <rect x="1" y="1" width="41" height="31" rx="3" fill="#f6f6f6" stroke="#999" />
          <rect x="5" y="5" width="33" height="22" fill="url(#screenBlue)" />
        </svg>
        屏幕捕获
      </CamButton>
      <Timer>00:00:00</Timer>
    </OCamBody>
  </OCam>
);

export default function App() {
  return (
    <Page>
      <Global />
      <TitleBar>
        <svg width="14" height="13" viewBox="0 0 14 13">
          <rect width="14" height="13" fill="#2c7a5a" />
          <path d="M2 10L5 3L7 10M8 3H12V6H9V10H12" stroke="#f2f2f2" strokeWidth="1.2" fill="none" />
        </svg>
        <TitleText>AutoCAD 2007 - [C:\Users\Administrator\Desktop\CAD练手专用习题集.dwg]</TitleText>
        <WinButtons>
          <WinButton>
            <svg width="12" height="8" viewBox="0 0 12 8"><rect x="1" y="2" width="10" height="4" fill="none" stroke="#667" /></svg>
          </WinButton>
          <WinButton>
            <svg width="12" height="10" viewBox="0 0 12 10"><path d="M4 1H10V6H8M2 4H7V9H2Z" fill="none" stroke="#667" /></svg>
          </WinButton>
          <WinButton>
            <svg width="10" height="9" viewBox="0 0 10 9"><path d="M1 1L9 8M9 1L1 8" stroke="#778" strokeWidth="1.4" /></svg>
          </WinButton>
        </WinButtons>
      </TitleBar>

      <MenuBar>
        <svg width="17" height="15" viewBox="0 0 17 15" style={{ marginRight: 4 }}>
          <path d="M1 14L5 5H16V14Z" fill="#f0d040" />
          <rect x="4" y="0" width="9" height="7" fill="#2c5f8a" />
        </svg>
        {MENUS.map(([m, w]) => (
          <MenuItem key={m} $w={w}>{m}</MenuItem>
        ))}
        <MdiButtons>
          <MdiButton>
            <svg width="8" height="8" viewBox="0 0 8 8"><path d="M1 6H6" stroke="#888" strokeWidth="1.4" /></svg>
          </MdiButton>
          <MdiButton>
            <svg width="9" height="9" viewBox="0 0 9 9"><path d="M3 1H8V5M1 3H6V8H1Z" fill="none" stroke="#888" /></svg>
          </MdiButton>
          <MdiButton>
            <svg width="8" height="8" viewBox="0 0 8 8"><path d="M1 1L7 7M7 1L1 7" stroke="#888" strokeWidth="1.2" /></svg>
          </MdiButton>
        </MdiButtons>
      </MenuBar>

      <ToolRow $h={25}>
        <Grip />
        <Combo $w={153} $ml={3}>AutoCAD <ComboCjk>经典</ComboCjk></Combo>
        <Tool $w={1} />
        <Tools names={['qsel', 'house']} />
        <Grip $ml={9} $mr={3} />
        <Tools names={['new', 'open', 'save']} />
        <VSep $w={4} />
        <Tools names={['print', 'preview', 'publish', 'web']} />
        <VSep $w={5} />
        <Tools names={['cut', 'copy', 'paste', 'match', 'bedit']} />
        <VSep $w={5} />
        <Tool><Icon n="undo" /></Tool>
        <SmallArrow />
        <Tool><Icon n="redo" /></Tool>
        <SmallArrow $off />
        <VSep $w={8} />
        <Tools names={['pan', 'zoomr', 'zoomw', 'zoomp']} />
        <VSep $w={5} />
        <Tools names={['props', 'dc', 'tp', 'ss', 'markup', 'calc']} />
        <VSep $w={4} />
        <Tools names={['help']} />
      </ToolRow>

      <ToolRow $h={24}>
        <Grip />
        <Tool $w={22}><Icon n="layers" /></Tool>
        <Combo $w={270} $ml={-3}>
          <LayerState>
            <Icon n="bulb" />
            <Icon n="sun" />
            <Icon n="freeze" />
            <Icon n="lockL" />
          </LayerState>
          <Swatch />
          <ComboCjk>轮廓线</ComboCjk>
        </Combo>
        <Tools names={['layprev', 'laymatch']} />
        <Grip $ml={6} />
        <Tool $w={23}><Icon n="styleA" /></Tool>
        <Combo $w={93}>Standard</Combo>
        <Tool $w={30}><Icon n="dimstyle" /></Tool>
        <Combo $w={84} $pl={0}>ISO-25</Combo>
        <Tool $w={30}><Icon n="tblstyle" /></Tool>
        <Combo $w={85} $pl={0}>Standard</Combo>
        <Grip $ml={8} />
        <Combo $w={135} $ml={2}><Swatch />ByLayer</Combo>
        <Combo $w={142} $ml={3} $pl={4}><LineSample $w={54} />ByLayer</Combo>
        <Combo $w={113} $ml={5}><LineSample $w={30} $thick />ByLayer</Combo>
        <Combo $w={105} $ml={5} $off><ComboCjk>随颜色</ComboCjk></Combo>
      </ToolRow>

      <Main>
        <LeftDock>
          {LEFT_BARS.map((bar) => (
            <VBar key={bar.groups[0][0]} $h={bar.h}>
              <VGroups groups={bar.groups} />
            </VBar>
          ))}
        </LeftDock>
        <CenterCol>
          <Drawing />
          <TabBar>
            <NavBtn>|◀</NavBtn>
            <NavBtn>◀</NavBtn>
            <NavBtn>▶</NavBtn>
            <NavBtn>▶|</NavBtn>
            <SheetTab $active $ml={3}>模型</SheetTab>
            <SheetTab $ml={-1}>布局1</SheetTab>
            <SheetTab $ml={-1}>布局2</SheetTab>
          </TabBar>
        </CenterCol>
        <RightDock>
          <RightBar>
            <VGroups groups={[['dock1', 'dock2', 'dock3', 'dock4']]} />
          </RightBar>
        </RightDock>
      </Main>

      <CommandArea>
        <CommandGrip />
        <CommandBox>
          <History>
            <HistoryText>
              <div>命令： *取消*</div>
              <div>命令： *取消*</div>
            </HistoryText>
            <VScroll>
              <span>▲</span>
              <span>▼</span>
            </VScroll>
          </History>
          <PromptRow>
            命令：
            <HScroll>
              <span>◀</span>
              <Thumb />
              <span>▶</span>
            </HScroll>
          </PromptRow>
        </CommandBox>
      </CommandArea>

      <StatusBar>
        <Coords>1482.9626, -176.4410, 0.0000</Coords>
        {STATUS.map((s) => (
          <StatusBtn key={s.t} $w={s.w} $on={s.on} $latin={s.latin}>{s.t}</StatusBtn>
        ))}
        <Tray>
          <Icon n="warn" />
          <Icon n="padlock" />
          <Icon n="comm" />
          <SmallArrow />
          <svg width="14" height="14" viewBox="0 0 14 14">
            <rect x="0.5" y="0.5" width="13" height="13" fill="#a9c4de" stroke="#4a7cb8" />
          </svg>
        </Tray>
      </StatusBar>

      <OCamWindow />
    </Page>
  );
}
